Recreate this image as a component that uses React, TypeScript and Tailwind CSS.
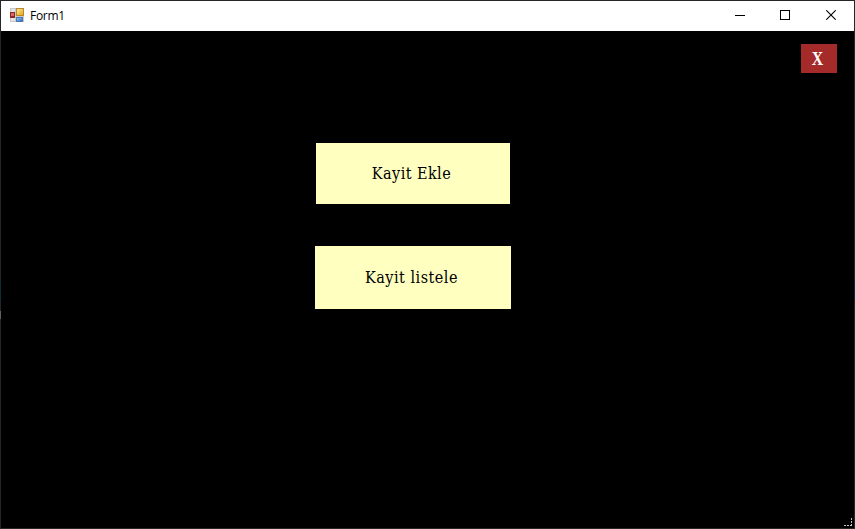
function FormIcon() {
  return (
    <svg width="14" height="14" viewBox="0 0 14 14" shapeRendering="crispEdges">
      <defs>
        <linearGradient id="gold" x1="0" y1="0" x2="1" y2="1">
          <stop offset="0" stopColor="#ffe9a0" />
          <stop offset="1" stopColor="#e5a50f" />
        </linearGradient>
        <linearGradient id="blue" x1="0" y1="0" x2="1" y2="1">
          <stop offset="0" stopColor="#9cc4f2" />
          <stop offset="1" stopColor="#2f68b8" />
        </linearGradient>
      </defs>
      <rect x="0" y="0" width="14" height="14" fill="#c9c9cb" />
      <rect x="1" y="1" width="4" height="3" fill="#e4e4e6" />
      <rect x="1" y="10" width="4" height="3" fill="#e4e4e6" />
      <rect x="0" y="4" width="5" height="6" fill="#8f2a22" />
      <rect x="1" y="5" width="3" height="3" fill="#d8695c" />
      <rect x="6" y="0" width="8" height="8" fill="#b98a2c" />
      <rect x="7" y="1" width="6" height="6" fill="url(#gold)" />
      <rect x="6" y="9" width="7" height="5" fill="#4a77b5" />
      <rect x="7" y="10" width="5" height="3" fill="url(#blue)" />
    </svg>
  );
}

function TitleBar() {
  return (
    <header className="flex h-[30px] shrink-0 items-center bg-white text-black">
      <div className="flex flex-1 items-center gap-[6px] pb-[2px] pl-[9px]">
        <FormIcon />
        <span className="pt-px font-['Open_Sans','Noto_Sans',sans-serif] text-[12px] leading-4 tracking-[-0.3px]">
          Form1
        </span>
      </div>
      <button className="flex h-full w-[45px] items-center justify-center pb-px" aria-label="Minimize">
        <svg width="11" height="11" shapeRendering="crispEdges">
          <path d="M0 5.5H10" stroke="#000" />
        </svg>
      </button>
      <button className="flex h-full w-[46px] items-center justify-center pr-[2px] pb-[2px]" aria-label="Maximize">
        <svg width="10" height="10" shapeRendering="crispEdges">
          <path d="M.5 .5H9.5V9.5H.5Z" stroke="#000" fill="none" />
        </svg>
      </button>
      <button className="flex h-full w-[45px] items-center justify-center pr-[2px] pb-[2px]" aria-label="Close">
        <svg width="10" height="10">
          <path d="M.3 .3L9.7 9.7M9.7 .3L.3 9.7" stroke="#000" strokeWidth="1.1" />
        </svg>
      </button>
    </header>
  );
}

export default function App() {
  return (
    <div className="relative flex h-[529px] w-[855px] flex-col border border-[#262626] bg-black font-['DejaVu_Serif_Condensed','DejaVu_Serif',serif]">
      <TitleBar />
      <main className="flex flex-1 flex-col">
        <div className="flex justify-end pt-[13px] pr-[17px]">
          <button className="flex h-[29px] w-9 items-center justify-center bg-[#a52a2a] pr-[3px] font-['Liberation_Serif',serif] text-[18px] leading-none font-bold text-white">
            <span className="scale-x-[0.88]">X</span>
          </button>
        </div>
        <div className="mt-[70px] ml-[314px] flex w-[196px] flex-col items-center gap-[42px] text-[16px] leading-5 text-black">
          <button className="h-[61px] w-[194px] bg-[#ffffc0] pr-[3px] tracking-[0.45px]">Kayit Ekle</button>
          <button className="h-[63px] w-[196px] bg-[#ffffc0] pr-[3px] tracking-[0.5px]">Kayit listele</button>
        </div>
      </main>
      <div className="absolute top-[279px] -left-px h-[20px] w-px bg-[#102c3c]" />
      <div className="absolute top-[310px] -left-px h-[8px] w-px bg-[#606060]" />
      <div className="absolute top-[279px] -right-px h-[20px] w-px bg-[#0b2a48]" />
      <svg className="absolute right-[1px] bottom-[1px]" width="9" height="9" shapeRendering="crispEdges" fill="#c8c8c8">
        <path d="M7 0h1v2h-1zM7 3h1v2h-1zM7 6h1v2h-1zM0 7h2v1h-2zM3 7h2v1h-2zM6 7h2v1h-2z" />
      </svg>
    </div>
  );
}
